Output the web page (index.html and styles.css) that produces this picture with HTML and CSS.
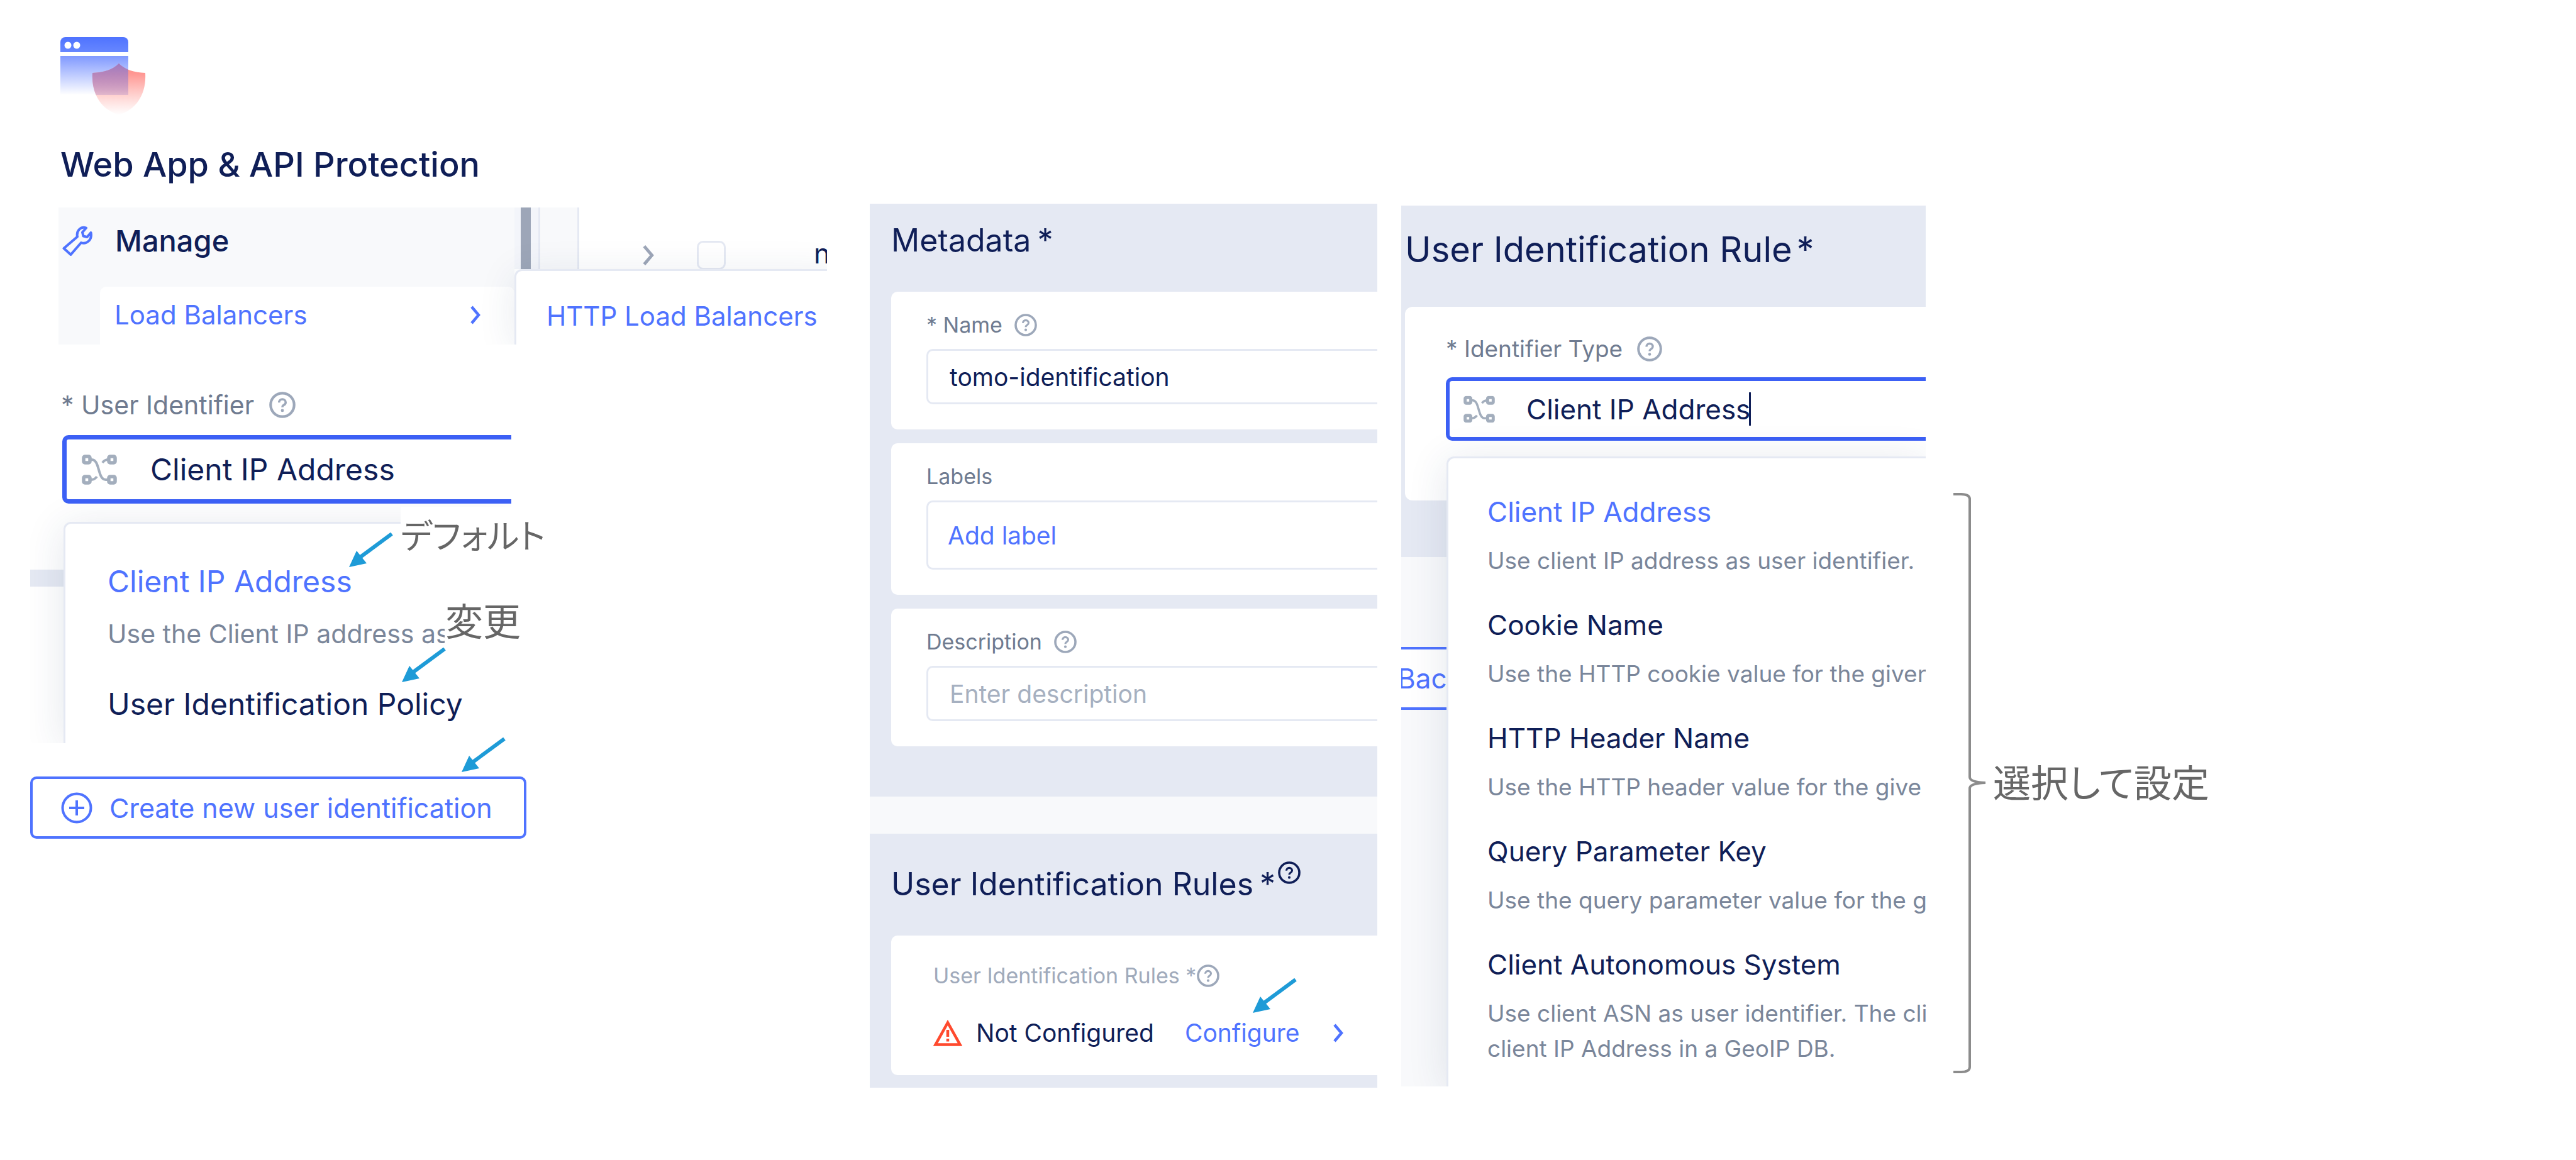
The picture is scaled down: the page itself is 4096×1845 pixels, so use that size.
FILE: index.html
```html
<!DOCTYPE html>
<html lang="ja">
<head>
<meta charset="utf-8">
<title>Web App &amp; API Protection</title>
<link rel="stylesheet" href="styles.css">
</head>
<body>
<svg class="sprite" aria-hidden="true">
  <symbol id="help" viewBox="0 0 40 40">
    <circle cx="20" cy="20" r="17.800" fill="none" stroke="currentColor" stroke-width="4"/>
    <path d="M15 16.500c0-3 2.200-5 5-5s5 2 5 4.600c0 2.800-2 3.600-3.600 4.700-1 .7-1.400 1.300-1.400 2.700" fill="none" stroke="currentColor" stroke-width="3.400"/>
    <circle cx="20" cy="28.500" r="2.300" fill="currentColor"/>
  </symbol>
  <symbol id="nodes" viewBox="0 0 56 48">
    <g fill="none" stroke="currentColor" stroke-width="5.500">
      <rect x="3" y="3" width="10" height="10" rx="2"/>
      <rect x="43" y="3" width="10" height="10" rx="2"/>
      <rect x="3" y="35" width="10" height="10" rx="2"/>
      <rect x="43" y="35" width="10" height="10" rx="2"/>
      <path stroke-width="4" d="M14 8h2c13 0 9 32 22 32h5M43 8c-6 0-8 2-10 5M14 40c6 0 8-2 10-5"/>
    </g>
  </symbol>
  <symbol id="chevron" viewBox="0 0 18 30">
    <path d="M3 2l11 13L3 28" fill="none" stroke="currentColor" stroke-width="4.500"/>
  </symbol>
  <symbol id="arrow" viewBox="0 0 70 56">
    <path d="M68 2L18 39" stroke="#1e9bd7" stroke-width="6"/>
    <path d="M0 55L12 29L28 49Z" fill="#1e9bd7"/>
  </symbol>
</svg>

<main class="board">
  <section class="column">
    <header class="brand">
      <svg class="logo" viewBox="0 0 136 124" aria-hidden="true">
        <defs>
          <linearGradient id="bar" x1="0" y1="0" x2="0" y2="1"><stop offset="0" stop-color="#4f73ff"/><stop offset="1" stop-color="#6787ff"/></linearGradient>
          <linearGradient id="pane" x1="0" y1="0" x2="0" y2="1"><stop offset="0" stop-color="#8099ff"/><stop offset="1" stop-color="#8099ff" stop-opacity="0"/></linearGradient>
          <linearGradient id="shield" x1="0" y1="0" x2="0" y2="1"><stop offset="0" stop-color="#ff8078" stop-opacity=".9"/><stop offset=".2" stop-color="#ff8580" stop-opacity=".85"/><stop offset="1" stop-color="#ff9a94" stop-opacity="0"/></linearGradient>
          <linearGradient id="overlap" x1="0" y1="0" x2="0" y2="1"><stop offset="0" stop-color="#8878d0" stop-opacity=".8"/><stop offset=".5" stop-color="#b08cc8" stop-opacity=".5"/><stop offset="1" stop-color="#c8a0c8" stop-opacity="0"/></linearGradient>
          <clipPath id="paneclip"><path d="M0 30h108v62H0z"/></clipPath>
        </defs>
        <path d="M8 0h92a8 8 0 0 1 8 8v16H0V8a8 8 0 0 1 8-8z" fill="url(#bar)"/>
        <circle cx="12" cy="13" r="5.500" fill="#fff"/><circle cx="26" cy="13" r="5.500" fill="#fff"/>
        <path d="M0 30h108v62H0z" fill="url(#pane)"/>
        <path d="M93 42c10 10 24 14 42 15 2 34-14 58-42 67-28-9-44-33-42-67 18-1 32-5 42-15z" fill="url(#shield)"/>
        <path clip-path="url(#paneclip)" d="M93 42c10 10 24 14 42 15 2 34-14 58-42 67-28-9-44-33-42-67 18-1 32-5 42-15z" fill="url(#overlap)"/>
      </svg>
      <h1 class="brand-title">Web App &amp; API Protection</h1>
    </header>

    <nav class="manage">
      <div class="sidebar">
        <div class="sidebar-head">
          <svg class="wrench" viewBox="0 0 48 48" aria-hidden="true"><path d="M38 3.500c-8-3-16 4-14 14L2.500 36l11 10L30 27c8 3 18-4 15.500-16l-6 7-6-1.500-1.500-6z" fill="none" stroke="#4f73ff" stroke-width="4" stroke-linejoin="round"/></svg>
          <span class="sidebar-title">Manage</span>
        </div>
        <a class="sidebar-link" href="#lb">Load Balancers<svg class="chevron" aria-hidden="true"><use href="#chevron"/></svg></a>
      </div>
      <div class="content">
        <div class="content-row">
          <span class="scrollbar"></span>
          <span class="gutter"></span>
          <svg class="chevron chevron-gray" viewBox="0 0 18 30" aria-hidden="true"><use href="#chevron"/></svg>
          <input class="tick" type="checkbox" aria-label="Select row">
          <span class="row-name">n</span>
        </div>
        <a class="submenu" href="#http">HTTP Load Balancers</a>
      </div>
    </nav>

    <section class="identifier">
      <label class="label label-lg" for="user-identifier">* User Identifier <svg class="help" aria-hidden="true"><use href="#help"/></svg></label>
      <div class="combo">
        <svg class="nodes" aria-hidden="true"><use href="#nodes"/></svg>
        <input class="combo-input" id="user-identifier" type="text" value="Client IP Address">
      </div>
      <div class="menu-area">
        <ul class="menu">
          <li><span class="option active">Client IP Address</span><span class="hint hint-short">Use the Client IP address as</span></li>
          <li><span class="option">User Identification Policy</span></li>
        </ul>
      </div>
    </section>

    <button class="create" type="button">
      <svg class="plus" viewBox="0 0 50 50" aria-hidden="true"><g fill="none" stroke="#4f73ff" stroke-width="4"><circle cx="25" cy="25" r="22.500"/><path d="M25 13v24M13 25h24"/></g></svg>
      Create new user identification
    </button>

    <span class="note note-default">デフォルト</span>
    <span class="note note-change">変更</span>
    <svg class="arrow arrow-default" aria-hidden="true"><use href="#arrow"/></svg>
    <svg class="arrow arrow-change" aria-hidden="true"><use href="#arrow"/></svg>
    <svg class="arrow arrow-create" aria-hidden="true"><use href="#arrow"/></svg>
  </section>

  <section class="metadata">
    <div class="block">
      <h2 class="heading">Metadata<span class="star">*</span></h2>
      <div class="card">
        <label class="label" for="name">* Name <svg class="help" aria-hidden="true"><use href="#help"/></svg></label>
        <input class="field" id="name" type="text" value="tomo-identification">
      </div>
      <div class="card">
        <span class="label">Labels</span>
        <button class="field field-tall" type="button">Add label</button>
      </div>
      <div class="card">
        <label class="label" for="description">Description <svg class="help" aria-hidden="true"><use href="#help"/></svg></label>
        <input class="field" id="description" type="text" placeholder="Enter description">
      </div>
    </div>
    <div class="block block-rules">
      <h2 class="heading">User Identification Rules<span class="star">*</span><svg class="help help-dark" aria-hidden="true"><use href="#help"/></svg></h2>
      <div class="card card-rules">
        <span class="label label-light">User Identification Rules *<svg class="help" aria-hidden="true"><use href="#help"/></svg></span>
        <div class="status">
          <svg class="warn" viewBox="0 0 46 42" aria-hidden="true"><path d="M23 4.500L42.500 39.500h-39z" fill="none" stroke="#ff4a2e" stroke-width="4.500"/><path d="M23 16v11M23 30v4.500" stroke="#ff4a2e" stroke-width="4.500"/></svg>
          <span>Not Configured</span>
          <a class="configure" href="#configure">Configure</a>
          <svg class="chevron" aria-hidden="true"><use href="#chevron"/></svg>
        </div>
      </div>
      <svg class="arrow arrow-configure" aria-hidden="true"><use href="#arrow"/></svg>
    </div>
  </section>

  <section class="rule">
    <div class="rule-form">
      <div class="rule-block">
        <h2 class="heading heading-lg">User Identification Rule<span class="star">*</span></h2>
        <div class="rule-card">
          <label class="label label-md" for="identifier-type">* Identifier Type <svg class="help" aria-hidden="true"><use href="#help"/></svg></label>
          <div class="combo combo-sm">
            <svg class="nodes" viewBox="0 0 56 48" aria-hidden="true"><use href="#nodes"/></svg>
            <input class="combo-input" id="identifier-type" type="text" value="Client IP Address">
            <span class="caret"></span>
          </div>
        </div>
      </div>
      <button class="back" type="button">Back</button>
    </div>
    <ul class="menu menu-rule">
      <li><span class="option active">Client IP Address</span><span class="hint">Use client IP address as user identifier.</span></li>
      <li><span class="option">Cookie Name</span><span class="hint">Use the HTTP cookie value for the given</span></li>
      <li><span class="option">HTTP Header Name</span><span class="hint">Use the HTTP header value for the give</span></li>
      <li><span class="option">Query Parameter Key</span><span class="hint">Use the query parameter value for the g</span></li>
      <li><span class="option">Client Autonomous System</span><span class="hint">Use client ASN as user identifier. The cli<br>client IP Address in a GeoIP DB.</span></li>
    </ul>
  </section>

  <aside class="choices">
    <svg class="bracket" viewBox="0 0 58 924" aria-hidden="true"><path d="M6 2h12q14 0 14 8v442q0 8 25 9q-25 1-25 9v443q0 8-14 8H6" fill="none" stroke="#8c8c8c" stroke-width="4"/></svg>
    <span class="note note-choose">選択して設定</span>
  </aside>
</main>
</body>
</html>
```
FILE: styles.css
```css
* { box-sizing: border-box; }

body {
  margin: 0;
  background: #fff;
  color: #0f1e57;
  font-family: Inter, "Noto Sans CJK JP", sans-serif;
}

h1, h2, ul { margin: 0; padding: 0; font-weight: 400; }
ul { list-style: none; }
a { color: #4f73ff; text-decoration: none; }
svg { display: block; flex: none; }
button, input { font: inherit; color: inherit; margin: 0; }

.sprite { position: absolute; width: 0; height: 0; }

.board {
  display: grid;
  grid-template-columns: minmax(0, 1297fr) minmax(0, 807fr) minmax(0, 834fr) minmax(0, 996fr);
  column-gap: 38px;
  align-items: start;
  min-height: 100vh;
  padding-left: 48px;
}

/* Left column */
.column {
  position: relative;
  display: flex;
  flex-direction: column;
  align-items: flex-start;
  padding-top: 59px;
}
.brand { padding-left: 48px; }
.logo { width: 136px; height: 124px; }
.brand-title {
  margin-top: 47px;
  font-size: 54px;
  line-height: 64px;
  font-weight: 500;
  white-space: nowrap;
}

.manage {
  display: flex;
  align-self: stretch;
  height: 218px;
  margin: 36px 30px 0 45px;
  overflow: hidden;
}
.sidebar {
  flex: 725 1 0;
  padding-top: 25px;
  background: #f8f9fb;
}
.sidebar-head { display: flex; align-items: center; gap: 36px; padding-left: 6px; }
.wrench { width: 48px; height: 48px; }
.sidebar-title { font-size: 47px; line-height: 56px; font-weight: 500; }
.sidebar-link {
  display: flex;
  justify-content: space-between;
  align-items: center;
  height: 110px;
  margin: 45px 0 0 66px;
  padding: 0 53px 20px 23px;
  border-radius: 10px;
  background: #fff;
  font-size: 42px;
  line-height: 50px;
  white-space: nowrap;
}
.chevron { width: 18px; height: 30px; color: #4f73ff; }
.content {
  flex: 497 1 0;
  min-width: 0;
  display: flex;
  flex-direction: column;
  background: #fff;
}
.content-row {
  display: flex;
  height: 98px;
  padding-left: 10px;
  background: linear-gradient(90deg, #f3f5fa 101px, #fff 101px);
}
.scrollbar { flex: none; width: 16px; background: #9da6b8; }
.gutter {
  flex: none;
  width: 65px;
  margin: 0 100px 0 12px;
  border: solid #e5e9f3;
  border-width: 0 3px;
  background: #f8f9fb;
}
.chevron-gray { width: 20px; height: 36px; margin-top: 58px; color: #9da6b8; }
.tick {
  appearance: none;
  width: 46px;
  height: 46px;
  margin: 53px 140px 0 67px;
  flex: none;
  border: 3px solid #e5e9f3;
  border-radius: 10px;
}
.row-name { margin-top: 46px; font-size: 44px; line-height: 54px; }
.submenu {
  position: relative;
  flex: 1;
  margin-right: -20px;
  padding: 47px 0 0 48px;
  border: solid #e5e9f3;
  border-width: 3px 0 0 3px;
  border-radius: 12px 0 0 0;
  background: #fff;
  box-shadow: 0 8px 60px rgba(30, 55, 100, .1);
  font-size: 42px;
  line-height: 50px;
  white-space: nowrap;
}

.identifier {
  width: 59%;
  height: 563px;
  margin-top: 71px;
  overflow: hidden;
}
.label {
  display: flex;
  align-items: center;
  color: #6f7b90;
  font-size: 34px;
  line-height: 42px;
  white-space: nowrap;
}
.help { width: 36px; height: 36px; margin-left: 19px; color: #9da8ba; }
.label-lg { padding-left: 49px; font-size: 41px; line-height: 50px; }
.label-lg .help { width: 42px; height: 42px; margin-left: 24px; }
.label-md { font-size: 37px; line-height: 46px; }
.label-md .help { width: 40px; height: 40px; margin-left: 23px; }

.combo {
  position: relative;
  display: flex;
  align-items: center;
  height: 109px;
  margin: 23px 0 0 51px;
  padding-left: 24px;
  border: 7px solid #3c60f5;
  border-right: 0;
  border-radius: 10px 0 0 10px;
  background: #fff;
}
.nodes { width: 56px; height: 48px; color: #a3aebd; }
.combo-input {
  flex: 1;
  min-width: 0;
  padding: 0 0 0 53px;
  border: 0;
  outline: 0;
  background: none;
  font-size: 48px;
  line-height: 56px;
}
.menu-area {
  padding: 29px 0 0 53px;
  background: linear-gradient(#e5e9f3, #e5e9f3) 0 105px / 60px 27px no-repeat;
}
.menu {
  display: flex;
  flex-direction: column;
  gap: 58px;
  height: 352px;
  padding: 64px 0 0 67px;
  border: solid #e5e9f3;
  border-width: 3px 0 0 3px;
  border-radius: 12px 0 0 0;
  background: #fff;
  box-shadow: 0 8px 64px rgba(30, 55, 100, .12);
  white-space: nowrap;
}
.option { display: block; font-size: 48px; line-height: 56px; }
.active { color: #4f73ff; }
.hint { display: block; margin-top: 29px; color: #7a869a; font-size: 41px; line-height: 52px; }
.hint-short { width: 536px; overflow: hidden; }

.create {
  display: flex;
  align-items: center;
  gap: 27px;
  height: 99px;
  margin-top: 53px;
  padding: 0 50px 0 45px;
  border: 4px solid #4f73ff;
  border-radius: 10px;
  background: #fff;
  color: #4f73ff;
  font-size: 43px;
  white-space: nowrap;
}
.plus { width: 50px; height: 50px; }

/* Notes lying over the captures */
.note {
  color: #666;
  font-family: "Noto Sans CJK JP", sans-serif;
  font-size: 60px;
  line-height: 88px;
  font-feature-settings: "palt";
  white-space: nowrap;
}
.note-default, .note-change { position: absolute; }
.note-default { left: 589px; top: 806px; background: #fff; font-size: 54px; }
.note-change { left: 660px; top: 941px; }
.note-choose { padding-bottom: 8px; }
.arrow { position: absolute; width: 70px; height: 56px; }
.arrow-default { left: 507px; top: 847px; }
.arrow-change { left: 591px; top: 1030px; }
.arrow-create { left: 686px; top: 1173px; }
.arrow-configure { left: 609px; top: 230px; }

/* Metadata form */
.metadata {
  display: flex;
  flex-direction: column;
  gap: 59px;
  margin-top: 324px;
  background: #f8f9fb;
  overflow: hidden;
}
.block {
  position: relative;
  display: flex;
  flex-direction: column;
  gap: 22px;
  padding: 28px 0 80px 34px;
  background: #e5e9f3;
}
.block-rules { padding: 50px 0 20px 34px; }
.heading {
  display: flex;
  margin-bottom: 30px;
  font-size: 50px;
  line-height: 60px;
  white-space: nowrap;
}
.star { margin-left: 10px; }
.card {
  padding: 32px 0 40px 56px;
  border-radius: 10px 0 0 10px;
  background: #fff;
}
.field {
  display: block;
  width: 100%;
  height: 88px;
  margin-top: 17px;
  padding: 0 0 0 34px;
  border: 3px solid #e5e9f3;
  border-right: 0;
  border-radius: 10px 0 0 10px;
  background: #fff;
  font-size: 39px;
  text-align: left;
}
.field::placeholder { color: #a6b0c0; opacity: 1; }
.field-tall { height: 110px; padding-left: 31px; color: #4f73ff; }
.help-dark { margin: -6px 0 0 4px; color: #0f1e57; }
.card-rules { padding: 43px 0 44px 67px; }
.label-light { color: #a0aabb; }
.label-light .help { margin-left: 1px; }
.status {
  display: flex;
  align-items: center;
  margin-top: 47px;
  font-size: 39px;
  line-height: 46px;
  white-space: nowrap;
}
.warn { width: 46px; height: 42px; margin-right: 22px; }
.configure { margin: 0 53px 0 49px; }

/* Identification rule: form and the menu that opens over it */
.rule {
  display: grid;
  margin-top: 327px;
  background: #f8f9fb;
  overflow: hidden;
}
.rule-form, .menu-rule { grid-area: 1 / 1; min-width: 0; }
.rule-block { padding: 37px 0 90px 6px; background: #e5e9f3; }
.heading-lg { margin: 0 0 58px; font-size: 56px; line-height: 66px; }
.heading-lg .star { margin-left: 7px; }
.rule-card {
  padding: 44px 0 95px 65px;
  border-radius: 12px 0 0 12px;
  background: #fff;
}
.combo-sm { height: 101px; margin: 22px 0 0; padding-left: 22px; border-width: 6px; border-right: 0; }
.combo-sm .nodes { width: 50px; height: 44px; }
.combo-sm .combo-input { padding-left: 50px; font-size: 44px; }
.caret { position: absolute; left: 476px; top: 18px; width: 3px; height: 53px; background: #0f1e57; }
.back {
  height: 100px;
  margin: 143px 0 0 -60px;
  padding: 0 60px 0 50px;
  border: 4px solid #4f73ff;
  border-radius: 10px;
  background: #fff;
  color: #4f73ff;
  font-size: 44px;
}
.menu-rule {
  position: relative;
  gap: 48px;
  height: auto;
  margin: 399px 0 0 72px;
  padding: 59px 0 32px 62px;
}
.menu-rule .option { font-size: 44px; line-height: 52px; }
.menu-rule .hint { margin-top: 24px; font-size: 37px; line-height: 56px; }

/* Bracket beside the menu */
.choices { display: flex; align-items: center; gap: 11px; margin-top: 784px; }
.bracket { width: 58px; height: 924px; }
```
